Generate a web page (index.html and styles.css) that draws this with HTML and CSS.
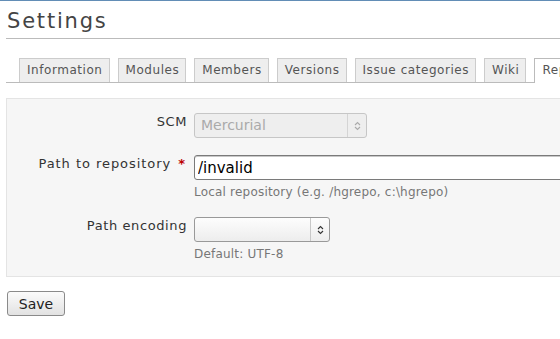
FILE: index.html
```html
<!DOCTYPE html>
<html lang="en">
<head>
    <meta charset="UTF-8">
    <title>Settings</title>
    <link rel="stylesheet" href="styles.css">
</head>
<body>
    <div class="top-line"></div>

    <div id="content">
        <h2>Settings</h2>

        <ul class="tabs">
            <li><a href="#">Information</a></li>
            <li><a href="#">Modules</a></li>
            <li><a href="#">Members</a></li>
            <li><a href="#">Versions</a></li>
            <li><a href="#">Issue categories</a></li>
            <li><a href="#">Wiki</a></li>
            <li><a href="#" class="selected">Repository</a></li>
        </ul>

        <div class="box tabular">
            <div class="row">
                <label>SCM</label>
                <div class="field">
                    <div class="select disabled scm">
                        <span class="select-text">Mercurial</span>
                        <span class="select-arrow">
                            <svg width="7" height="10" viewBox="0 0 7 10"><path d="M1 4 L3.5 1.5 L6 4 M1 6 L3.5 8.5 L6 6" fill="none" stroke="#aaa" stroke-width="1.1"/></svg>
                        </span>
                    </div>
                </div>
            </div>

            <div class="row">
                <label class="long-label">Path to repository <span class="required">*</span></label>
                <div class="field">
                    <input type="text" class="text-input" value="/invalid">
                    <em class="info">Local repository (e.g. /hgrepo, c:\hgrepo)</em>
                </div>
            </div>

            <div class="row">
                <label>Path encoding</label>
                <div class="field">
                    <div class="select encoding">
                        <span class="select-text"></span>
                        <span class="select-arrow">
                            <svg width="7" height="10" viewBox="0 0 7 10"><path d="M1 4 L3.5 1.5 L6 4 M1 6 L3.5 8.5 L6 6" fill="none" stroke="#333" stroke-width="1.1"/></svg>
                        </span>
                    </div>
                    <em class="info">Default: UTF-8</em>
                </div>
            </div>
        </div>

        <button class="save-btn">Save</button>
    </div>
</body>
</html>
```

FILE: styles.css
```css
body {
    margin: 0;
    padding: 0;
    background-color: #fff;
    color: #333;
    font-family: "DejaVu Sans", Verdana, sans-serif;
    overflow: hidden;
}

.top-line {
    height: 1px;
    background-color: #628db6;
}

#content {
    width: 700px;
    padding: 0 6px;
}

h2 {
    margin: 7px 0 0 0;
    padding: 0 0 4px 1px;
    font-size: 21px;
    font-weight: normal;
    line-height: 26px;
    letter-spacing: 1.8px;
    color: #444;
    border-bottom: 1px solid #bbb;
}

.tabs {
    list-style: none;
    margin: 19px 0 0 0;
    padding: 0 0 0 13px;
    display: flex;
    gap: 8px;
    border-bottom: 1px solid #bbb;
    height: 24px;
}

.tabs li {
    display: flex;
}

.tabs a {
    display: block;
    height: 23px;
    line-height: 23px;
    padding: 0 6px 0 7px;
    font-size: 12px;
    letter-spacing: 0.55px;
    color: #555;
    text-decoration: none;
    background-color: #eee;
    border: 1px solid #ccc;
    border-bottom: none;
}

.tabs a.selected {
    background-color: #fff;
    height: 24px;
    border-color: #bbb;
}

.box {
    margin-top: 15px;
    background-color: #f6f6f6;
    border: 1px solid #e4e4e4;
    padding: 14px 0 14px 0;
}

.row {
    display: grid;
    grid-template-columns: 180px 1fr;
    column-gap: 7px;
    align-items: start;
}

.row + .row {
    margin-top: 17px;
}

.row label {
    text-align: right;
    font-size: 13px;
    line-height: 16px;
    letter-spacing: 0.6px;
    color: #333;
    padding-top: 1px;
}

.row label.long-label {
    letter-spacing: 0.95px;
    padding-right: 1px;
}

.required {
    color: #bb0000;
    font-weight: bold;
    margin-left: 2px;
}

.field {
    display: flex;
    flex-direction: column;
    align-items: flex-start;
}

.select {
    display: flex;
    height: 25px;
    box-sizing: border-box;
    border: 1px solid #999;
    border-radius: 3px;
    background: linear-gradient(#fdfdfd, #ededed);
    font-size: 14px;
}

.select.scm {
    width: 173px;
}

.select.encoding {
    width: 136px;
}

.select.disabled {
    border-color: #c6c6c6;
    background: #eee;
    color: #aaa;
}

.select-text {
    flex: 1;
    padding-left: 6px;
    line-height: 23px;
}

.select-arrow {
    width: 18px;
    border-left: 1px solid #c8c8c8;
    display: flex;
    align-items: center;
    justify-content: center;
}

.select.disabled .select-arrow {
    border-left-color: #d4d4d4;
}

.text-input {
    width: 420px;
    height: 25px;
    box-sizing: border-box;
    margin: 0;
    padding: 0 4px 0 3px;
    border: 1px solid #7a7a7a;
    border-radius: 3px;
    box-shadow: inset 0 1px 0 #c8c8c8;
    font-family: "DejaVu Sans", sans-serif;
    font-size: 15px;
    color: #000;
    background: #fff;
}

.info {
    display: block;
    margin-top: 4px;
    font-style: normal;
    font-family: "DejaVu Sans", sans-serif;
    font-size: 12px;
    letter-spacing: 0.2px;
    line-height: 16px;
    color: #777;
}

.save-btn {
    margin: 14px 0 0 1px;
    width: 58px;
    height: 25px;
    padding: 0;
    font-family: "DejaVu Sans", sans-serif;
    font-size: 14px;
    color: #222;
    border: 1px solid #8a8a8a;
    border-radius: 3px;
    background: linear-gradient(#fbfbfb, #e2e2e2);
}
```
